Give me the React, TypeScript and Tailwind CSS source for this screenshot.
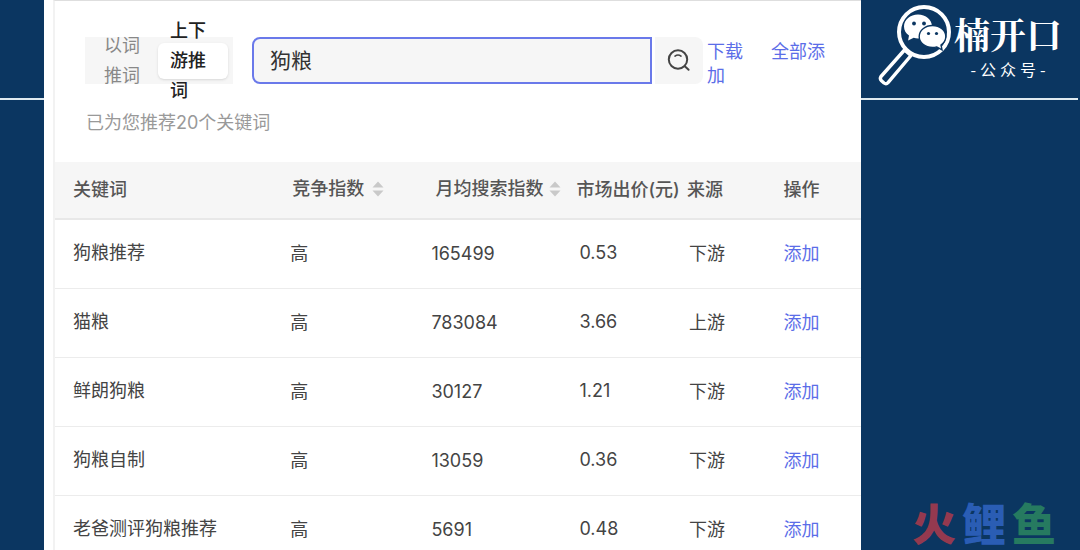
import { useState } from "react";

const rows = [
  { keyword: "狗粮推荐", level: "高", searches: "165499", price: "0.53", source: "下游" },
  { keyword: "猫粮", level: "高", searches: "783084", price: "3.66", source: "上游" },
  { keyword: "鲜朗狗粮", level: "高", searches: "30127", price: "1.21", source: "下游" },
  { keyword: "狗粮自制", level: "高", searches: "13059", price: "0.36", source: "下游" },
  { keyword: "老爸测评狗粮推荐", level: "高", searches: "5691", price: "0.48", source: "下游" },
];

function SortIcon() {
  return (
    <svg viewBox="0 0 12 16" className="h-4 w-3 fill-[#c9c9c9]" aria-hidden="true">
      <path d="M6 0.5 11.5 6.5H0.5ZM6 15.5 0.5 9.5H11.5Z" />
    </svg>
  );
}

function SearchIcon() {
  return (
    <svg viewBox="0 0 24 24" className="size-6 fill-none stroke-[#444] stroke-2" strokeLinecap="round" aria-hidden="true">
      <circle cx="11" cy="10.5" r="9.2" />
      <path d="M17.8 17.3 21.600 20.800" />
      <path d="M8 7.100Q11 4.900 14 7.100" strokeWidth="1.7" />
    </svg>
  );
}

function MagnifierLogo() {
  return (
    <svg viewBox="0 0 76 84" className="h-[84px] w-[76px] shrink-0" aria-hidden="true">
      <g fill="none" stroke="#fff" strokeLinejoin="round">
        <circle cx="46" cy="30" r="25" strokeWidth="4" />
        <path d="M26.5 48 3 74.5Q1.5 76.8 3.5 78.8L6 81Q8.2 82.6 10 80.6L33 53.5Z" strokeWidth="3.4" />
      </g>
      <path
        fill="#fff"
        d="M40 12.500c-7.800 0-14 5.300-14 12 0 3.700 1.900 7 5 9.100l-.9 5 5.600-2.800c1.400.4 2.800.6 4.300.6 7.800 0 14-5.300 14-11.900S47.800 12.500 40 12.500Z"
      />
      <path
        fill="#fff"
        stroke="#0b3661"
        strokeWidth="1.4"
        d="M54.500 23.500c-7.400 0-13.300 4.900-13.300 11s5.900 11 13.300 11c1.500 0 2.900-.2 4.300-.6l5.200 3-1-4.900c2.900-2 4.800-5.100 4.800-8.500 0-6.100-5.900-11-13.300-11Z"
      />
      <g fill="#0b3661">
        <circle cx="36" cy="21.500" r="1.900" />
        <circle cx="46" cy="21.500" r="1.900" />
        <circle cx="50.500" cy="31.500" r="1.600" />
        <circle cx="58.500" cy="31.500" r="1.600" />
      </g>
    </svg>
  );
}

export default function App() {
  const [mode, setMode] = useState("chain");
  const [query, setQuery] = useState("狗粮");
  const tab = (active: boolean) =>
    active
      ? "flex h-9 items-center rounded-md bg-white font-medium text-[#222] shadow-sm"
      : "flex h-9 items-center rounded-md text-[#888]";

  return (
    <div className="relative flex h-screen overflow-hidden bg-[#0b3661] font-['Inter','Noto_Sans_CJK_SC',sans-serif] text-lg text-[#444]">
      <aside className="w-11 shrink-0">
        <div className="h-[100px] border-b-2 border-[#dfeaf0]" />
      </aside>

      <main className="min-w-0 flex-1 bg-white pl-[9px]">
        <div className="h-full border-t border-l-2 border-[#f2f2f2] border-t-[#dedede]">
          <header className="pt-9 pr-6 pl-[30px]">
            <div className="flex h-[47px] items-start">
              <div className="flex h-full w-[148px] shrink-0 items-center justify-between bg-[#f6f6f6] pr-[5px] leading-[30px]">
                <button type="button" onClick={() => setMode("word")} className={`w-[70px] pl-[19px] ${tab(mode === "word")}`}>
                  <span className="w-9">以词推词</span>
                </button>
                <button type="button" onClick={() => setMode("chain")} className={`w-[70px] pl-3 ${tab(mode === "chain")}`}>
                  <span className="w-9 text-left">上下游推词</span>
                </button>
              </div>
              <input
                type="text"
                aria-label="关键词"
                value={query}
                onChange={(e) => setQuery(e.target.value)}
                className="ml-[19px] h-full min-w-0 flex-1 rounded-l-lg border-2 border-[#6a79ea] bg-[#f6f6f6] px-4 pb-1 text-[21px] text-[#333] outline-none"
              />
              <button type="button" aria-label="搜索" className="ml-[3px] flex h-full w-12 shrink-0 items-center justify-center rounded-r-lg bg-[#f6f6f6]">
                <SearchIcon />
              </button>
              <div className="mt-[3px] ml-1 w-[130px] shrink-0 leading-6 text-[#5b6de8]">
                <a href="#download" className="mr-7">下载</a>
                <a href="#add-all">全部添加</a>
              </div>
            </div>
            <p className="mt-[25px] pl-px leading-7 text-[#999]">已为您推荐20个关键词</p>
          </header>

          <table className="mt-[25px] w-full table-fixed text-left leading-7">
            <colgroup>
              <col className="w-[29.200%]" />
              <col className="w-[17.500%]" />
              <col className="w-[18%]" />
              <col className="w-[13.700%]" />
              <col className="w-[12%]" />
              <col />
            </colgroup>
            <thead>
              <tr className="h-[57px] border-b-2 border-[#e8e8e8] bg-[#f6f6f6] whitespace-nowrap text-[#555]">
                <th className="pl-[18px] font-medium">关键词</th>
                <th className="font-medium">
                  <button type="button" className="flex items-center gap-2 pb-0.5 pl-0.5">竞争指数<SortIcon /></button>
                </th>
                <th className="font-medium">
                  <button type="button" className="flex items-center gap-1.5 pb-0.5 pl-1">月均搜索指数<SortIcon /></button>
                </th>
                <th className="font-medium">市场出价(元)</th>
                <th className="font-medium">来源</th>
                <th className="font-medium">操作</th>
              </tr>
            </thead>
            <tbody>
              {rows.map((row) => (
                <tr key={row.keyword} className="h-[69px] border-b border-[#ececec]">
                  <td className="pb-0.5 pl-[18px]">{row.keyword}</td>
                  <td>{row.level}</td>
                  <td>{row.searches}</td>
                  <td className="pb-0.5 pl-[3px]">{row.price}</td>
                  <td className="pl-0.5">{row.source}</td>
                  <td><button type="button" className="text-[#5b6de8]">添加</button></td>
                </tr>
              ))}
            </tbody>
          </table>
        </div>
      </main>

      <aside className="w-[219px] shrink-0">
        <div className="mr-0.5 flex h-[100px] items-start border-b-2 border-[#dfeaf0] pt-0.5 pl-[17px] text-white">
          <MagnifierLogo />
          <div className="flex flex-col items-center pt-3 font-['Noto_Serif_CJK_SC','Noto_Sans_CJK_SC',serif]">
            <div className="text-4xl leading-10 font-bold whitespace-nowrap">楠开口</div>
            <div className="mt-px flex gap-1 font-['Noto_Sans_CJK_SC',sans-serif] text-base leading-7">
              <span>-</span><span>公</span><span>众</span><span>号</span><span>-</span>
            </div>
          </div>
        </div>
      </aside>

      <div className="absolute right-6 bottom-1 flex gap-1.5 font-['Noto_Sans_CJK_SC',sans-serif] text-[44px] leading-[48px] font-black">
        <span className="text-[#94394f]">火</span>
        <span className="text-[#2a5db4]">鲤</span>
        <span className="text-[#267a60]">鱼</span>
      </div>
    </div>
  );
}
